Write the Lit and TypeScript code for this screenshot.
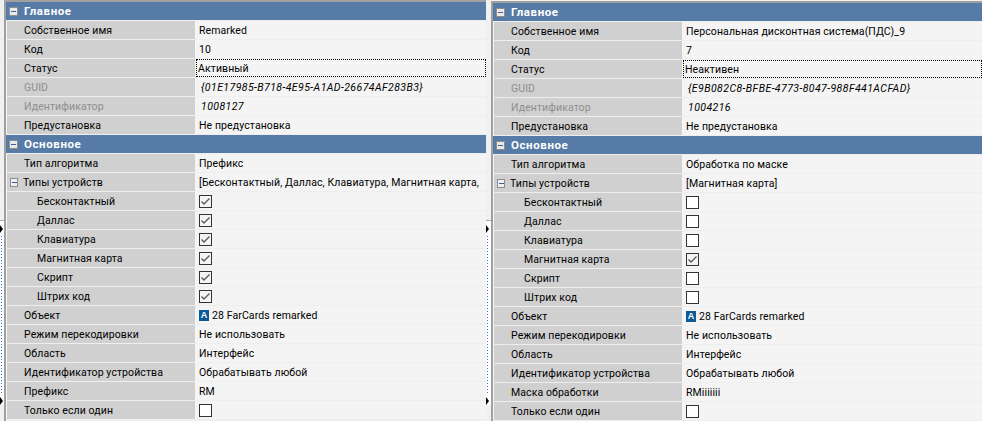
import { LitElement, html, css } from "lit";
import { customElement, property } from "lit/decorators.js";

type Row = {
  name: string;
  value?: string;
  kind?: "text" | "check" | "object" | "ital";
  checked?: boolean;
  sub?: boolean;
  group?: boolean;
  off?: boolean;
  focus?: boolean;
};

const minus = () => html`<span class="minus"><i></i></span>`;

@customElement("prop-panel")
class PropPanel extends LitElement {
  @property({ attribute: false }) main: Row[] = [];
  @property({ attribute: false }) base: Row[] = [];

  static styles = css`
    :host {
      display: block;
      min-width: 0;
      border-top: 2px solid #a0a0a0;
      border-left: 2px solid #a0a0a0;
      background: #eeeeee;
      font: 10.5px "Roboto", sans-serif;
      color: #000;
      overflow: hidden;
    }
    .list { display: flex; flex-direction: column; gap: 1px; }
    .head {
      height: 18px;
      background: #567ba6;
      color: #fff;
      font-weight: 700;
      font-size: 11.5px;
      letter-spacing: 0.6px;
      display: flex;
      align-items: center;
      padding-left: 3px;
    }
    .head span.t { margin-left: 6px; }
    .minus {
      flex: none;
      box-sizing: border-box;
      width: 9px;
      height: 9px;
      display: flex;
      align-items: center;
      justify-content: center;
      border: 1px solid #8d8d8d;
      background: #e9e9e9;
    }
    .minus i { display: block; width: 5px; height: 1px; background: #3d5f9c; }
    .row { display: flex; height: 18px; padding-left: 1px; background: #f6f6f6; }
    .name {
      flex: none;
      box-sizing: border-box;
      width: 188px;
      background: #d0d0d0;
      display: flex;
      align-items: center;
      padding-left: 17px;
      letter-spacing: 0.1px;
      white-space: nowrap;
    }
    .name.sub { padding-left: 30px; }
    .name.off { color: #8f8f8f; }
    .name.grp { padding-left: 3px; }
    .name.grp .minus { margin-right: 5px; background: #f0f0f0; width: 8px; }
    .val {
      flex: 1;
      min-width: 0;
      box-sizing: border-box;
      margin-left: 1px;
      background: #f4f4f4;
      display: flex;
      align-items: center;
      padding-left: 3px;
      white-space: nowrap;
      overflow: hidden;
      letter-spacing: 0.1px;
    }
    .val.focus { outline: 1px dotted #000; outline-offset: -1px; padding-left: 2px; }
    .val.ital { font-style: italic; padding-left: 5px; letter-spacing: 0.42px; }
    .box {
      flex: none;
      box-sizing: border-box;
      width: 13px;
      height: 13px;
      border: 1px solid #333;
      background: #fff;
      display: block;
    }
    .box.on { background: #f4f4f4; }
    .box svg { display: block; }
    .logo {
      flex: none;
      width: 10px;
      height: 11px;
      background: #0b5a97;
      color: #fff;
      font: 700 9px/11px "Liberation Sans", sans-serif;
      text-align: center;
      margin-right: 3px;
    }
  `;

  renderValue(r: Row) {
    if (r.kind === "check") {
      return html`<div class="val">
        <span class="box ${r.checked ? "on" : ""}">
          ${r.checked
            ? html`<svg width="11" height="11" viewBox="0 0 11 11"><path d="M1.5 5.5 L4 8 L9.5 2.5" fill="none" stroke="#5a5a5a" stroke-width="1.4" /></svg>`
            : ""}
        </span>
      </div>`;
    }
    if (r.kind === "object") {
      return html`<div class="val"><span class="logo">A</span>${r.value}</div>`;
    }
    return html`<div class="val ${r.kind === "ital" ? "ital" : ""} ${r.focus ? "focus" : ""}">${r.value}</div>`;
  }

  renderRow(r: Row) {
    const cls = `name ${r.sub ? "sub" : ""} ${r.off ? "off" : ""} ${r.group ? "grp" : ""}`;
    return html`<div class="row">
      <div class=${cls}>${r.group ? minus() : ""}${r.name}</div>
      ${this.renderValue(r)}
    </div>`;
  }

  render() {
    return html`<div class="list">
      <div class="head">${minus()}<span class="t">Главное</span></div>
      ${this.main.map((r) => this.renderRow(r))}
      <div class="head">${minus()}<span class="t">Основное</span></div>
      ${this.base.map((r) => this.renderRow(r))}
    </div>`;
  }
}

const mainRows = (name: string, code: string, status: string, guid: string, id: string): Row[] => [
  { name: "Собственное имя", value: name },
  { name: "Код", value: code },
  { name: "Статус", value: status, focus: true },
  { name: "GUID", value: guid, kind: "ital", off: true },
  { name: "Идентификатор", value: id, kind: "ital", off: true },
  { name: "Предустановка", value: "Не предустановка" },
];

const baseRows = (
  algo: string,
  devices: string,
  checks: boolean[],
  lastName: string,
  lastVal: string
): Row[] => [
  { name: "Тип алгоритма", value: algo },
  { name: "Типы устройств", value: devices, group: true },
  ...["Бесконтактный", "Даллас", "Клавиатура", "Магнитная карта", "Скрипт", "Штрих код"].map(
    (n, i): Row => ({ name: n, sub: true, kind: "check", checked: checks[i] })
  ),
  { name: "Объект", value: "28 FarCards remarked", kind: "object" },
  { name: "Режим перекодировки", value: "Не использовать" },
  { name: "Область", value: "Интерфейс" },
  { name: "Идентификатор устройства", value: "Обрабатывать любой" },
  { name: lastName, value: lastVal },
  { name: "Только если один", kind: "check", checked: false },
];

@customElement("app-root")
export class AppRoot extends LitElement {
  static styles = css`
    :host { display: block; width: 982px; height: 421px; overflow: hidden; background: #f0f0f0; }
    .wrap { display: flex; height: 421px; }
    .gutter {
      flex: none;
      display: flex;
      flex-direction: column;
      box-sizing: border-box;
      height: 421px;
      width: 4px;
      padding-top: 220px;
    }
    .gutter.mid { width: 5px; }
    .lane {
      flex: none;
      height: 185px;
      box-sizing: border-box;
      background: #ffffff;
      border-top: 1px solid #a8a8a8;
      display: flex;
      flex-direction: column;
      align-items: flex-start;
      padding-top: 4px;
    }
    .arrow {
      flex: none;
      width: 0;
      height: 0;
      border-left: 3px solid #000;
      border-top: 4px solid transparent;
      border-bottom: 4px solid transparent;
    }
    .dots {
      flex: 1;
      width: 1px;
      margin: 3px 0 3px 1px;
      background: repeating-linear-gradient(to bottom, #1f78d8 0 1px, transparent 1px 3px);
    }
    prop-panel.a { flex: none; width: 480px; }
    prop-panel.b { flex: none; width: 489px; margin-top: 1px; }
  `;

  gutter(cls: string) {
    return html`<div class="gutter ${cls}">
      <div class="lane">
        <div class="arrow"></div>
        <div class="dots"></div>
        <div class="arrow"></div>
      </div>
    </div>`;
  }

  render() {
    return html`<div class="wrap">
      ${this.gutter("")}
      <prop-panel
        class="a"
        .main=${mainRows("Remarked", "10", "Активный", "{01E17985-B718-4E95-A1AD-26674AF283B3}", "1008127")}
        .base=${baseRows(
          "Префикс",
          "[Бесконтактный, Даллас, Клавиатура, Магнитная карта,",
          [true, true, true, true, true, true],
          "Префикс",
          "RM"
        )}
      ></prop-panel>
      ${this.gutter("mid")}
      <prop-panel
        class="b"
        .main=${mainRows("Персональная дисконтная система(ПДС)_9", "7", "Неактивен", "{E9B082C8-BFBE-4773-8047-988F441ACFAD}", "1004216")}
        .base=${baseRows(
          "Обработка по маске",
          "[Магнитная карта]",
          [false, false, false, true, false, false],
          "Маска обработки",
          "RMiiiiiii"
        )}
      ></prop-panel>
    </div>`;
  }
}
